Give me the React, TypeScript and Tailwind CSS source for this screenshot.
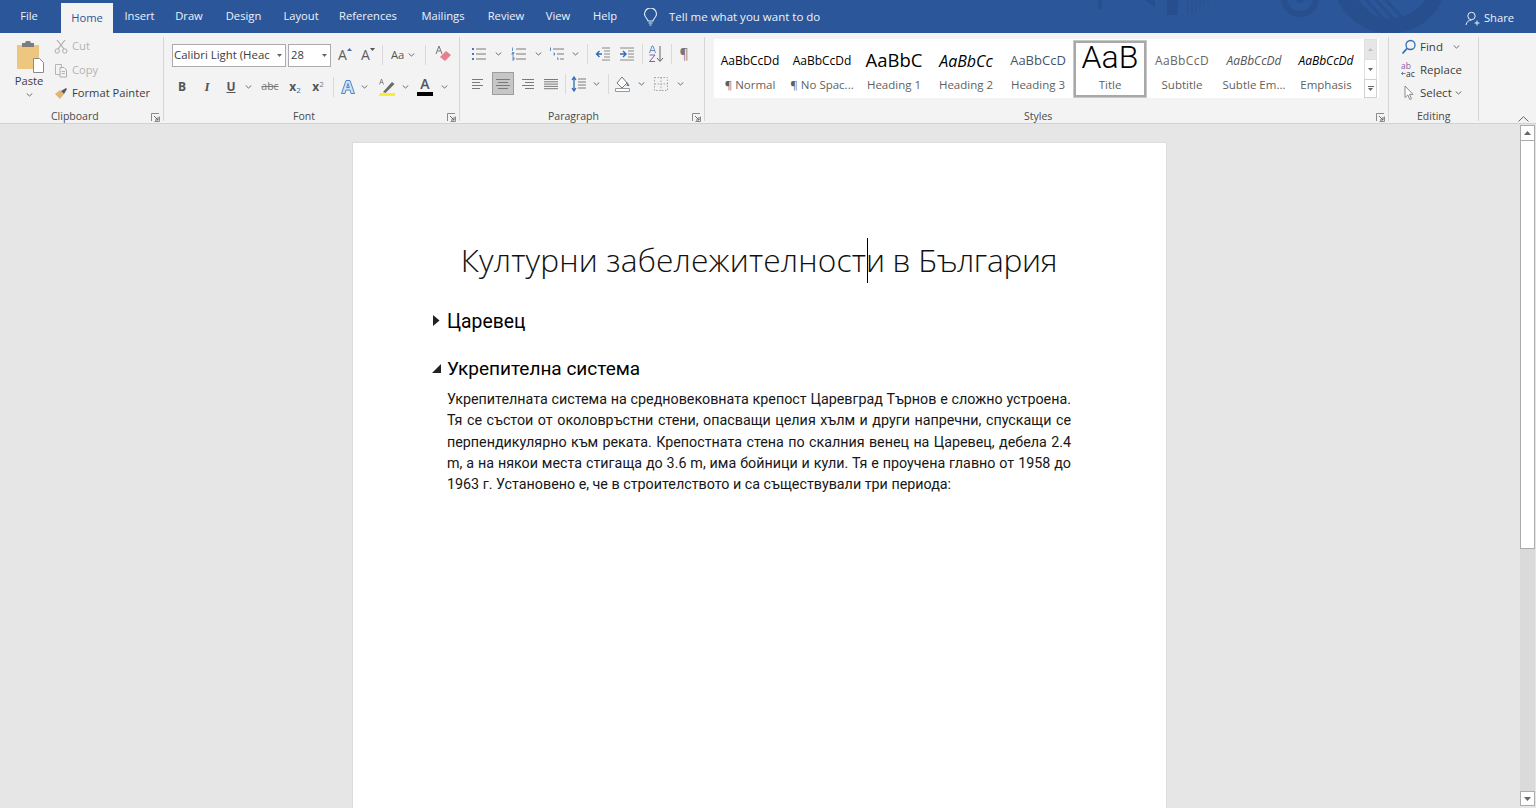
import React from "react";

const Chev = ({ c = "ml-0" }: { c?: string }) => (
  <span className={`flex w-[10px] justify-center ${c}`}>
    <svg width="7" height="4" viewBox="0 0 7 4" fill="none"><path d="M.7.5 3.5 3 6.3.5" stroke="#6b6b6b" strokeWidth="1" /></svg>
  </span>
);

const Launcher = () => (
  <svg width="9" height="9" viewBox="0 0 9 9" fill="none" className="shrink-0">
    <path d="M.5 8V.5H8" stroke="#8a8a8a" /><path d="M8.5 3.5v5h-5" stroke="#8a8a8a" /><path d="M3 3l4 4M7 4v3H4" stroke="#6b6b6b" />
  </svg>
);

const Sep = ({ c, h = "h-[20px]" }: { c: string; h?: string }) => <span className={`w-px shrink-0 bg-[#d9d9d9] ${h} ${c}`} />;

const Lines = ({ kind }: { kind: "l" | "c" | "r" | "j" }) => {
  const rows = kind === "l" ? [[1, 12], [1, 9], [1, 12], [1, 9]] : kind === "c" ? [[1, 15], [3, 13], [1, 15], [3, 13]] : kind === "r" ? [[3, 15], [6, 15], [3, 15], [6, 15]] : [[1, 15], [1, 15], [1, 15], [1, 15], [1, 15]];
  return (
    <svg width="16" height="14" viewBox="0 0 16 14" fill="none">
      {rows.map((r, i) => <path key={i} d={`M${r[0]} ${2.5 + i * (kind === "j" ? 2.3 : 3)}H${r[1]}`} stroke="#7a7a7a" />)}
    </svg>
  );
};

const Group = ({ w, label, labelC, launcher, children }: { w: string; label: string; labelC: string; launcher?: boolean; children: React.ReactNode }) => (
  <div className={`flex h-[84px] shrink-0 flex-col border-r border-[#d6d6d6] ${w}`}>
    <div className="h-[72px] shrink-0">{children}</div>
    <div className="flex h-[14px] shrink-0 items-center pt-[2px] text-[10.5px] text-[#4a4a4a]">
      <span className={labelC}>{label}</span>
      {launcher && <span className="ml-auto mr-[3px] flex"><Launcher /></span>}
    </div>
  </div>
);

const StyleItem = ({ sample, label, selected }: { sample: React.ReactNode; label: string; selected?: boolean }) => (
  <div className={`flex h-[56px] w-[72px] shrink-0 flex-col items-center overflow-hidden ${selected ? "border-[2px] border-[#a8a8a8] bg-white outline outline-1 outline-[#c8c8c8]" : ""}`}>
    <div className={`flex w-full items-center justify-center overflow-hidden whitespace-nowrap ${selected ? "h-[28px]" : "h-[32px] pt-[8px]"}`}>{sample}</div>
    <div className={`text-[11.5px] leading-[16px] text-[#5f5f5f] whitespace-nowrap ${selected ? "mt-[6px]" : "mt-[4px]"}`}>{label}</div>
  </div>
);

const Tab = ({ w, children, active }: { w: string; children: React.ReactNode; active?: boolean }) => (
  <div className={`flex shrink-0 items-center justify-center ${w} ${active ? "mt-[3px] h-[30px] bg-[#f3f3f3] text-[#2b579a]" : "h-[33px] text-[#eef2f8]"}`}>{children}</div>
);

const Grow = ({ c, fill, up }: { c: string; fill: string; up?: boolean }) => (
  <span className={`flex w-[16px] items-start ${c}`}>
    <span className="text-[14px] leading-[16px] text-[#5c5c5c]">A</span>
    <svg width="5" height="3" viewBox="0 0 5 3" className="mt-[1px]"><path d={up ? "M0 3h5L2.500 0z" : "M0 0h5L2.500 3z"} fill={fill} /></svg>
  </span>
);

export default function App() {
  return (
    <div className="flex h-[808px] w-[1536px] flex-col overflow-hidden bg-[#e6e6e6] font-['Open_Sans','Noto_Sans',sans-serif] text-[11.2px] text-[#444]">
      {/* title bar */}
      <div className="relative flex h-[33px] shrink-0 items-start bg-[#2b579a] pl-[3px]">
        <svg className="absolute left-0 top-0" width="1536" height="33" viewBox="0 0 1536 33" fill="none">
          <circle cx="1390" cy="-24" r="50" stroke="#284f8d" strokeWidth="15" />
          <path d="M1356 0l22 22M1366 0l22 24M1376 0l22 24M1386 0l20 22" stroke="#284f8d" strokeWidth="3" />
          <circle cx="1300" cy="-2" r="16" stroke="#284f8d" strokeWidth="6" />
          <circle cx="1300" cy="-2" r="5" fill="#284f8d" />
          <path d="M1167 0h11v15h-11zM1145 0h10v8zM1098 0h4v9h-4z" fill="#284f8d" />
          <path d="M1188 0v14M1192 0v14M1196 0v13M1200 0v10M1204 0v6M1208 0v3" stroke="#2a5290" strokeWidth="2" />
        </svg>
        <Tab w="w-[52px]"><span>File</span></Tab>
        <span className="w-[6px]" />
        <Tab w="w-[52px]" active><span>Home</span></Tab>
        <Tab w="w-[53px]"><span>Insert</span></Tab>
        <Tab w="w-[46px]"><span>Draw</span></Tab>
        <Tab w="w-[63px]"><span>Design</span></Tab>
        <Tab w="w-[52px]"><span>Layout</span></Tab>
        <Tab w="w-[82px]"><span>References</span></Tab>
        <Tab w="w-[68px]"><span>Mailings</span></Tab>
        <Tab w="w-[58px]"><span>Review</span></Tab>
        <Tab w="w-[46px]"><span>View</span></Tab>
        <Tab w="w-[48px]"><span>Help</span></Tab>
        <div className="relative z-10 ml-[14px] flex h-[33px] items-center text-[11.5px] text-[#eef2f8]">
          <svg width="15" height="18" viewBox="0 0 15 18" fill="none"><path d="M5 13c0-2-3.500-3.500-3.500-7a6 6 0 0 1 12 0c0 3.500-3.500 5-3.500 7zM5.500 15h4M6.500 17h2" stroke="#e8eef7" strokeWidth="1.100" /></svg>
          <span className="ml-[11px]">Tell me what you want to do</span>
        </div>
        <div className="relative z-10 ml-auto mr-[22px] mt-[2px] flex h-[33px] items-center text-[#eef2f8]">
          <svg width="15" height="15" viewBox="0 0 15 15" fill="none"><circle cx="6.500" cy="5" r="3.700" stroke="#e8eef7" /><path d="M1 14c.5-3 2.500-5 5.500-5M9.500 12h5M12 9.500v5" stroke="#e8eef7" /></svg>
          <span className="ml-[4px]">Share</span>
        </div>
      </div>

      {/* ribbon */}
      <div className="flex h-[91px] shrink-0 items-start border-b border-[#d2d2d2] bg-[#f3f3f3] pt-[4px]">
        {/* clipboard */}
        <Group w="w-[164px]" label="Clipboard" labelC="ml-[51px]" launcher>
          <div className="flex">
            <div className="ml-[14px] flex w-[30px] flex-col items-center">
              <svg width="30" height="33" viewBox="0 0 30 33" fill="none" className="mt-[3px]">
                <rect x="3" y="5" width="22" height="24" fill="#edc67f" /><path d="M8 3h3l1-2h4l1 2h3v4H8z" fill="#7d7d7d" />
                <path d="M19.500 18.500h6l4 4v10H19.500z" fill="#fff" stroke="#8a8a8a" />
              </svg>
              <span className="mt-[1px] leading-[14px] text-[#3c3c3c]">Paste</span>
              <Chev c="mt-[5px]" />
            </div>
            <div className="ml-[10px] -mt-[2px] flex flex-col">
              <div className="flex h-[23.500px] items-center text-[#b3b3b3]">
                <svg width="14" height="15" viewBox="0 0 14 15" fill="none"><path d="M3 1l7 9M11 1L4 10" stroke="#adadad" strokeWidth="1.200" /><circle cx="3.200" cy="12" r="2.200" stroke="#adadad" /><circle cx="10.800" cy="12" r="2.200" stroke="#adadad" /></svg>
                <span className="ml-[4px]">Cut</span>
              </div>
              <div className="flex h-[23.500px] items-center text-[#b3b3b3]">
                <svg width="14" height="15" viewBox="0 0 14 15" fill="none"><path d="M1.500 1.500h6v10h-6z" stroke="#b5b5b5" /><path d="M6 4.500h4l2.500 2.500v7H6z" fill="#f3f3f3" stroke="#adadad" /><path d="M7.500 8.500h3.500M7.500 10.500h3.500" stroke="#b5b5b5" /></svg>
                <span className="ml-[4px]">Copy</span>
              </div>
              <div className="flex h-[23.500px] items-center text-[#3c3c3c]">
                <svg width="14" height="13" viewBox="0 0 14 13" fill="none"><path d="M1 7l5-4 4 4-4 5z" fill="#e3b56e" /><path d="M7 4l5-3 1 1-3 5z" fill="#5a5a5a" /></svg>
                <span className="ml-[4px]">Format Painter</span>
              </div>
            </div>
          </div>
        </Group>

        {/* font */}
        <Group w="w-[296px]" label="Font" labelC="ml-[129px]" launcher>
          <div className="flex h-[30px] items-center pt-[6px]">
            <div className="ml-[8px] flex h-[23px] w-[114px] items-center border border-[#ababab] bg-white pl-[1px] text-[#3c3c3c]">
              <span className="whitespace-nowrap text-[11.4px]">Calibri Light (Heac</span>
              <svg width="5" height="3" viewBox="0 0 5 3" className="ml-auto mr-[3px] shrink-0"><path d="M0 0h5L2.500 3z" fill="#666" /></svg>
            </div>
            <div className="ml-[2px] flex h-[23px] w-[43px] items-center border border-[#ababab] bg-white pl-[2px] text-[#3c3c3c]">
              <span>28</span>
              <svg width="5" height="3" viewBox="0 0 5 3" className="ml-auto mr-[3px]"><path d="M0 0h5L2.500 3z" fill="#666" /></svg>
            </div>
            <Grow c="ml-[7px]" fill="#3f6fb0" up />
            <Grow c="ml-[7px]" fill="#555" />
            <Sep c="ml-[5px]" />
            <span className="ml-[8px] w-[16px] text-[#555]">Aa</span>
            <Chev c="-ml-[1px]" />
            <Sep c="ml-[9px]" />
            <span className="ml-[7px] flex">
              <svg width="20" height="20" viewBox="0 0 20 20" fill="none"><path d="M6 1 3 9M6 1l3 8M4.500 6h3" stroke="#777" /><path d="M7 12l6-6 5 4-6 6z" fill="#e8808c" /></svg>
            </span>
          </div>
          <div className="mt-[8px] flex h-[23px] items-center">
            <span className="ml-[6px] w-[24px] text-center text-[12px] font-bold text-[#555]">B</span>
            <span className="ml-[1px] w-[24px] text-center font-['Liberation_Serif',serif] text-[13px] font-bold italic text-[#555]">I</span>
            <span className="w-[24px] text-center text-[12px] font-bold text-[#555] underline">U</span>
            <Chev />
            <span className="ml-[5px] w-[24px] text-center text-[10.500px] text-[#777] line-through">abc</span>
            <span className="ml-[1px] w-[24px] text-center text-[12px] font-bold text-[#555]">x<sub className="text-[8px] font-normal text-[#3f6fb0]">2</sub></span>
            <span className="-ml-[1px] w-[24px] text-center text-[12px] font-bold text-[#555]">x<sup className="text-[8px] font-normal text-[#777]">2</sup></span>
            <Sep c="ml-[3px]" />
            <span className="ml-[2px] flex w-[24px] justify-center">
              <svg width="16" height="16" viewBox="0 0 16 16" fill="none"><path d="M1.500 14.500 6 1.500h4l4.500 13H11L10 11H6l-1 3.500zM6.700 8.500h2.600L8 4.500z" fill="#cfe2f5" stroke="#4f86c6" /></svg>
            </span>
            <Chev c="-ml-[1px]" />
            <span className="ml-[6px] flex w-[24px] justify-center">
              <svg width="18" height="19" viewBox="0 0 18 19" fill="none"><path d="M1 19l1-3h15v3z" fill="#f7ee34" /><path d="M5 15l9-10 2.500 2-9 9z" fill="#6a6a6a" /><path d="M1.500 7.500 3.500 2l2 5.500M2.200 5.500h2.600" stroke="#777" strokeWidth=".8" /></svg>
            </span>
            <Chev c="ml-[1px]" />
            <span className="ml-[3px] flex w-[24px] flex-col items-center">
              <span className="text-[14px] font-semibold leading-[14px] text-[#555]">A</span>
              <span className="mt-[1px] h-[4px] w-[16px] bg-black" />
            </span>
            <Chev c="ml-[2px]" />
          </div>
        </Group>

        {/* paragraph */}
        <Group w="w-[245px]" label="Paragraph" labelC="ml-[88px]" launcher>
          <div className="flex h-[30px] items-center pt-[4px]">
            <span className="ml-[10px] flex w-[17px] justify-center">
              <svg width="16" height="14" viewBox="0 0 16 14" fill="none"><path d="M1 1h2v2H1zM1 6h2v2H1zM1 11h2v2H1z" fill="#4a7ab5" /><path d="M5 2h10M5 7h10M5 12h10" stroke="#7a7a7a" /></svg>
            </span>
            <Chev c="ml-[6px]" />
            <span className="ml-[7px] flex w-[17px] justify-center">
              <svg width="16" height="14" viewBox="0 0 16 14" fill="none"><path d="M1.500.5V4M1 5.500h2v1H1v1.500h2M1 10h2v1.500H1.500M3 11.500V13H1" stroke="#4a7ab5" strokeWidth=".8" /><path d="M5 2h10M5 7h10M5 12h10" stroke="#7a7a7a" /></svg>
            </span>
            <Chev c="ml-[6px]" />
            <span className="ml-[5px] flex w-[17px] justify-center">
              <svg width="16" height="14" viewBox="0 0 16 14" fill="none"><path d="M1.500.5V4M4.500 6h1v2h-1M8 11h1v2" stroke="#4a7ab5" strokeWidth=".9" /><path d="M4 2h11M8 7h7M11 12h4" stroke="#7a7a7a" /></svg>
            </span>
            <Chev c="ml-[5px]" />
            <Sep c="ml-[7px]" />
            <span className="ml-[6px] flex w-[17px] justify-center">
              <svg width="16" height="14" viewBox="0 0 16 14" fill="none"><path d="M7 1h8M9 4h6M9 7h6M9 10h6M7 13h8" stroke="#8a8a8a" /><path d="M7 7H2M4.500 4 1.500 7l3 3" stroke="#2e6db4" strokeWidth="1.400" /></svg>
            </span>
            <span className="ml-[7px] flex w-[17px] justify-center">
              <svg width="16" height="14" viewBox="0 0 16 14" fill="none"><path d="M1 1h14M9 4h6M9 7h6M9 10h6M1 13h14" stroke="#8a8a8a" /><path d="M1 7h5M4 4l3 3-3 3" stroke="#2e6db4" strokeWidth="1.400" /></svg>
            </span>
            <Sep c="ml-[7px]" />
            <span className="ml-[5px] flex w-[17px] justify-center">
              <svg width="17" height="18" viewBox="0 0 17 18" fill="none"><path d="M1.500 8 4 1h1l2.500 7M2.500 5.500h4" stroke="#5f8fc9" /><path d="M1.500 10h5.500L1.500 16.500H7" stroke="#8a5aa8" /><path d="M12 1v15M9 13l3 3.500 3-3.500" stroke="#666" /></svg>
            </span>
            <Sep c="ml-[6px]" />
            <span className="ml-[5px] w-[14px] text-center text-[14px] leading-none text-[#777]">¶</span>
          </div>
          <div className="mt-[5px] flex h-[23px] items-center">
            <span className="ml-[8px] flex h-[23px] w-[22px] items-center justify-center"><Lines kind="l" /></span>
            <span className="ml-[2px] flex h-[23px] w-[22px] items-center justify-center border border-[#9d9d9d] bg-[#c6c6c6]"><Lines kind="c" /></span>
            <span className="ml-[2px] flex h-[23px] w-[22px] items-center justify-center"><Lines kind="r" /></span>
            <span className="ml-[2px] flex h-[23px] w-[22px] items-center justify-center"><Lines kind="j" /></span>
            <Sep c="ml-[3px]" />
            <span className="ml-[4px] flex w-[18px] justify-center">
              <svg width="16" height="16" viewBox="0 0 16 16" fill="none"><path d="M3 2v12M1 4l2-3 2 3M1 12l2 3 2-3" stroke="#2e6db4" strokeWidth="1.300" /><path d="M7 3h8M7 6h8M7 9h8M7 12h8" stroke="#7a7a7a" /></svg>
            </span>
            <Chev c="ml-[3px]" />
            <Sep c="ml-[7px]" />
            <span className="ml-[5px] flex w-[18px] justify-center">
              <svg width="18" height="17" viewBox="0 0 18 17" fill="none"><path d="M3 8l5-6 5 6-5 5z" fill="#fff" stroke="#777" /><path d="M13.500 7l2 4h-3z" fill="#4a86c6" /><path d="M1.500 13.500h14v3h-14z" fill="#fff" stroke="#999" /></svg>
            </span>
            <Chev c="ml-[4px]" />
            <span className="ml-[6px] flex w-[17px] justify-center">
              <svg width="16" height="16" viewBox="0 0 16 16" fill="none"><path d="M1.500 1.500h13v13h-13zM8 1.500v13M1.500 8h13" stroke="#a5a5a5" strokeDasharray="1.500 1.500" /></svg>
            </span>
            <Chev c="ml-[6px]" />
          </div>
        </Group>

        {/* styles */}
        <Group w="w-[684px]" label="Styles" labelC="ml-[319px]" launcher>
          <div className="ml-[9px] mt-[2px] flex h-[59px] w-[665px] items-center bg-white">
            <StyleItem label="¶ Normal" sample={<span className="text-[12px] text-black">AaBbCcDd</span>} />
            <StyleItem label="¶ No Spac..." sample={<span className="text-[12px] text-black">AaBbCcDd</span>} />
            <StyleItem label="Heading 1" sample={<span className="text-[18.5px] leading-none text-black">AaBbC</span>} />
            <StyleItem label="Heading 2" sample={<span className="text-[16px] font-medium italic leading-none text-black">AaBbCc</span>} />
            <StyleItem label="Heading 3" sample={<span className="text-[13px] leading-none text-[#44546a]">AaBbCcD</span>} />
            <StyleItem selected label="Title" sample={<span className="font-['Roboto',sans-serif] text-[32px] font-light leading-none text-black">AaB</span>} />
            <StyleItem label="Subtitle" sample={<span className="text-[12px] tracking-[.4px] text-[#666]">AaBbCcD</span>} />
            <StyleItem label="Subtle Em..." sample={<span className="text-[12px] italic text-[#555]">AaBbCcDd</span>} />
            <StyleItem label="Emphasis" sample={<span className="text-[12px] italic text-black">AaBbCcDd</span>} />
            <div className="ml-[2px] flex w-[13px] shrink-0 flex-col self-stretch">
              <span className="flex h-[21px] items-center justify-center border border-[#e0e0e0] bg-[#e6e6e6]"><svg width="5" height="3" viewBox="0 0 5 3"><path d="M0 3h5L2.500 0z" fill="#c0c0c0" /></svg></span>
              <span className="flex h-[19px] items-center justify-center border-x border-[#e0e0e0] bg-white"><svg width="5" height="3" viewBox="0 0 5 3"><path d="M0 0h5L2.500 3z" fill="#666" /></svg></span>
              <span className="flex h-[19px] flex-col items-center justify-center border border-[#d0d0d0] bg-white"><span className="mb-[1px] h-px w-[6px] bg-[#666]" /><svg width="5" height="3" viewBox="0 0 5 3"><path d="M0 0h5L2.500 3z" fill="#666" /></svg></span>
            </div>
          </div>
        </Group>

        {/* editing */}
        <Group w="w-[90px]" label="Editing" labelC="ml-[28px]">
          <div className="-mt-[2px] flex flex-col pl-[12px] text-[11.5px] text-[#3c3c3c]">
            <div className="flex h-[23px] items-center">
              <svg width="16" height="16" viewBox="0 0 16 16" fill="none"><circle cx="9.500" cy="6" r="4.500" stroke="#2e6db4" strokeWidth="1.300" /><path d="M6 9.500 1.500 14.500" stroke="#2e6db4" strokeWidth="1.800" /></svg>
              <span className="ml-[3px]">Find</span>
              <Chev c="ml-[9px]" />
            </div>
            <div className="flex h-[23px] items-center">
              <div className="flex w-[16px] flex-col text-[8.500px] leading-[8px]">
                <span className="text-[#8a5aa8]">ab</span>
                <span className="flex items-center">
                  <svg width="5" height="5" viewBox="0 0 5 5" fill="none"><path d="M4.500 2.500h-4M2 1 .5 2.500 2 4" stroke="#2e6db4" strokeWidth=".8" /></svg>
                  <span className="text-[#333]">ac</span>
                </span>
              </div>
              <span className="ml-[3px]">Replace</span>
            </div>
            <div className="flex h-[23px] items-center">
              <svg width="16" height="16" viewBox="0 0 16 16" fill="none"><path d="M4 1v11.500l2.800-2.500 2 4.500 1.700-.8-2-4.300h3.500z" fill="#fff" stroke="#8a8a8a" /></svg>
              <span className="ml-[3px]">Select</span>
              <Chev c="ml-[2px]" />
            </div>
          </div>
        </Group>

        <div className="flex h-[84px] flex-1 items-end justify-end pr-[7px]">
          <svg width="11" height="6" viewBox="0 0 11 6" fill="none" className="-mb-[1px]"><path d="M.5 5.500 5.500.7l5 4.800" stroke="#666" /></svg>
        </div>
      </div>

      {/* document area */}
      <div className="flex min-h-0 flex-1">
        <div className="flex min-w-0 flex-1 justify-start overflow-hidden pl-[352px] pt-[18px]">
          <div className="h-[800px] w-[815px] shrink-0 border border-[#dcdcdc] bg-white pl-[94px] font-['Roboto',sans-serif] text-black">
            <h1 className="mt-[92px] w-[624px] whitespace-nowrap text-center font-['Open_Sans',sans-serif] text-[31.700px] font-light leading-[50px] text-[#111]">
              <span className="tracking-[.15px]">Културни забележителност</span><span className="relative inline-block w-0"><span className="absolute -top-[34px] left-[1px] h-[45px] w-px bg-black" /></span><span className="tracking-[-.3px]">и в България</span>
            </h1>
            <div className="relative mt-[23px] flex h-[28px] items-center text-[19.300px]">
              <svg width="7" height="11" viewBox="0 0 7 11" className="absolute -left-[14px] top-[7px]"><path d="M0 0l6.500 5.500L0 11z" fill="#222" /></svg>
              <span>Царевец</span>
            </div>
            <div className="relative mt-[19px] flex h-[28px] items-center text-[19px]">
              <svg width="9" height="9" viewBox="0 0 9 9" className="absolute -left-[15px] top-[9px]"><path d="M9 0v9H0z" fill="#222" /></svg>
              <span>Укрепителна система</span>
            </div>
            <div className="mt-[6px] w-[624px] text-[14.300px] leading-[21.250px] text-[#161616]">
              <div className="whitespace-nowrap [text-align-last:justify]">Укрепителната система на средновековната крепост Царевград Търнов е сложно устроена.</div>
              <div className="whitespace-nowrap [text-align-last:justify]">Тя се състои от околовръстни стени, опасващи целия хълм и други напречни, спускащи се</div>
              <div className="whitespace-nowrap [text-align-last:justify]">перпендикулярно към реката. Крепостната стена по скалния венец на Царевец, дебела 2.4</div>
              <div className="whitespace-nowrap [text-align-last:justify]">m, а на някои места стигаща до 3.6 m, има бойници и кули. Тя е проучена главно от 1958 до</div>
              <div className="whitespace-nowrap">1963 г. Установено е, че в строителството и са съществували три периода:</div>
            </div>
          </div>
        </div>
        {/* scrollbar */}
        <div className="mr-px flex w-[15px] shrink-0 flex-col pb-[2px] pt-[1px]">
          <span className="flex h-[16px] shrink-0 items-center justify-center border border-[#ababab] bg-white"><svg width="7" height="4" viewBox="0 0 7 4"><path d="M0 4h7L3.500 0z" fill="#666" /></svg></span>
          <span className="h-[408px] shrink-0 border-x border-b border-[#ababab] bg-white" />
          <span className="flex-1 bg-[#dadada]" />
          <span className="flex h-[15px] shrink-0 items-center justify-center border border-[#ababab] bg-white"><svg width="7" height="4" viewBox="0 0 7 4"><path d="M0 0h7L3.500 4z" fill="#666" /></svg></span>
        </div>
      </div>
    </div>
  );
}
